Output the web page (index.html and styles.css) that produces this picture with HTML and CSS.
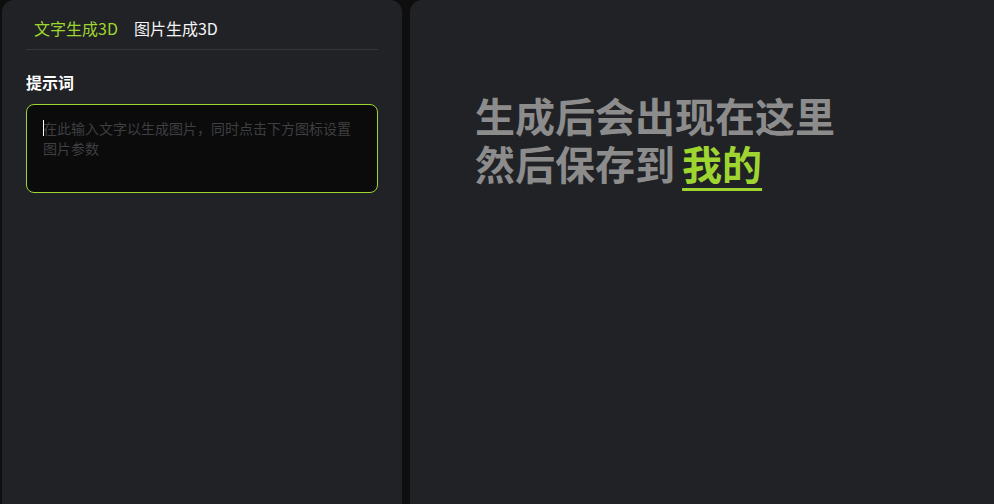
FILE: index.html
```html
<!DOCTYPE html>
<html lang="zh">
<head>
<meta charset="utf-8">
<link rel="stylesheet" href="styles.css">
</head>
<body>
<div class="app">
  <aside class="side">
    <div class="tabs">
      <span class="tab active">文字生成3D</span>
      <span class="tab">图片生成3D</span>
    </div>
    <div class="label">提示词</div>
    <div class="prompt">
      <span class="caret"></span><span class="placeholder">在此输入文字以生成图片，同时点击下方图标设置图片参数</span>
    </div>
  </aside>
  <main class="stage">
    <div class="hint">
      <div class="line">生成后会出现在这里</div>
      <div class="line">然后保存到 <span class="mine">我的</span></div>
    </div>
  </main>
</div>
</body>
</html>
```
FILE: styles.css
```css
html, body {
  margin: 0;
  padding: 0;
  background: #0e0e0e;
  height: 100%;
  overflow: hidden;
  font-family: "Noto Sans CJK SC", "Noto Sans", sans-serif;
}
.app {
  display: flex;
  gap: 8px;
  padding-left: 2px;
  height: 520px;
}
.side {
  width: 352px;
  flex: none;
  background: #212226;
  border-radius: 12px 12px 0 0;
  padding: 0 24px;
}
.tabs {
  display: flex;
  gap: 16px;
  padding: 16px 8px 0;
  height: 33px;
  border-bottom: 1px solid #36373b;
}
.tab {
  font-size: 16px;
  line-height: 24px;
  color: #f4f4f4;
}
.tab.active {
  color: #9ed530;
}
.label {
  margin-top: 20px;
  font-size: 16px;
  font-weight: 700;
  line-height: 24px;
  color: #ffffff;
}
.prompt {
  box-sizing: border-box;
  margin-top: 10px;
  height: 89px;
  border: 1px solid #9ed530;
  border-radius: 8px;
  background: #0b0b0b;
  padding: 13px 24px 0 16px;
  font-size: 14px;
  line-height: 20px;
  color: #3e3f42;
  position: relative;
}
.caret {
  position: absolute;
  left: 16px;
  top: 15px;
  width: 1px;
  height: 16px;
  background: #ffffff;
}
.stage {
  flex: 1;
  background: #212226;
  border-radius: 12px 0 0 0;
  padding: 91px 0 0 65px;
}
.hint {
  font-size: 40px;
  font-weight: 700;
  color: #8c8c8c;
}
.line {
  height: 48px;
  line-height: 48px;
  white-space: nowrap;
}
.mine {
  color: #9ed530;
  margin-left: -2px;
  text-decoration: underline;
  text-decoration-thickness: 3px;
  text-underline-offset: 8px;
}
```
